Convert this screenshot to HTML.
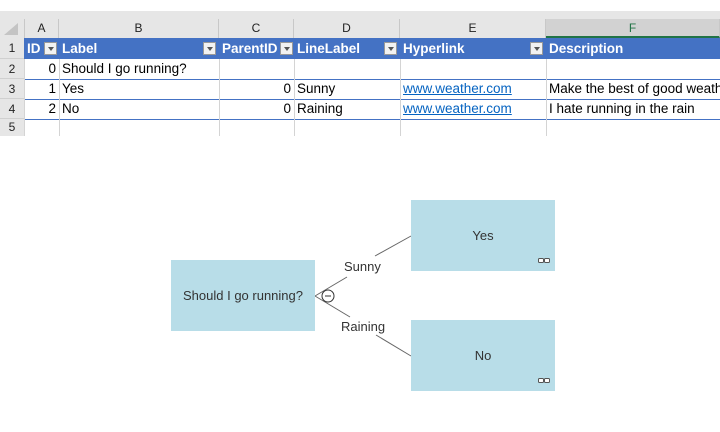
<!DOCTYPE html>
<html><head><style>
body{margin:0;width:720px;height:432px;background:#fff;font-family:"Liberation Sans",Calibri,sans-serif;position:relative;overflow:hidden}
.a{position:absolute;box-sizing:border-box}
.hdr{background:#e6e6e6;top:11px;height:27px;left:0;width:720px}
.cl{top:19px;height:19px;font-size:12px;text-align:center;color:#222;line-height:19px;border-right:1px solid #c8c8c8}
.rh{left:0;width:24px;font-size:12px;text-align:center;color:#222;background:#e6e6e6;border-bottom:1px solid #d0d0d0}
.c{font-size:13.5px;color:#000;line-height:20px;white-space:nowrap;overflow:hidden;padding:0 3px}
.th{background:#4472c4;color:#fff;font-weight:bold;top:38px;height:21px;line-height:21px}
.dd{position:absolute;width:13px;height:13px;top:4px;background:#f2f2f2;border:1px solid #999;box-sizing:border-box}
.dd:after{content:"";position:absolute;left:3px;top:4px;border:3px solid transparent;border-top:4px solid #555}
.box{background:#b8dde8;font-size:13px;color:#333;display:flex;align-items:center;justify-content:center}
.lnk{color:#0563c1;text-decoration:underline}
</style></head><body>
<div class="a hdr"></div>
<div class="a" style="left:4px;top:23px;width:0;height:0;border-left:14px solid transparent;border-bottom:12px solid #c4c4c4"></div>
<div class="a cl" style="left:24px;width:35px;border-left:1px solid #c8c8c8">A</div>
<div class="a cl" style="left:59px;width:160px">B</div>
<div class="a cl" style="left:219px;width:75px">C</div>
<div class="a cl" style="left:294px;width:106px">D</div>
<div class="a cl" style="left:400px;width:146px">E</div>
<div class="a cl" style="left:546px;width:174px;background:#d2d2d2;color:#217346;border-bottom:2px solid #217346">F</div>
<div class="a rh" style="top:38px;height:21px;line-height:21px">1</div>
<div class="a rh" style="top:59px;height:20px;line-height:20px">2</div>
<div class="a rh" style="top:79px;height:20px;line-height:20px">3</div>
<div class="a rh" style="top:99px;height:20px;line-height:20px">4</div>
<div class="a rh" style="top:119px;height:17px;line-height:17px;border-bottom:none">5</div>
<div class="a th c" style="left:24px;width:696px;padding:0"></div>
<div class="a th c" style="left:24px">ID</div><div class="dd" style="left:44px;top:42px"></div>
<div class="a th c" style="left:59px">Label</div><div class="dd" style="left:203px;top:42px"></div>
<div class="a th c" style="left:219px">ParentID</div><div class="dd" style="left:280px;top:42px"></div>
<div class="a th c" style="left:294px">LineLabel</div><div class="dd" style="left:384px;top:42px"></div>
<div class="a th c" style="left:400px">Hyperlink</div><div class="dd" style="left:530px;top:42px"></div>
<div class="a th c" style="left:546px">Description</div>
<div class="a" style="left:24px;top:79px;width:696px;height:1px;background:#4472c4"></div>
<div class="a" style="left:24px;top:99px;width:696px;height:1px;background:#4472c4"></div>
<div class="a" style="left:24px;top:119px;width:696px;height:1px;background:#4472c4"></div>
<div class="a" style="left:59px;top:59px;width:1px;height:77px;background:#d4d4d4"></div>
<div class="a" style="left:219px;top:59px;width:1px;height:77px;background:#d4d4d4"></div>
<div class="a" style="left:294px;top:59px;width:1px;height:77px;background:#d4d4d4"></div>
<div class="a" style="left:400px;top:59px;width:1px;height:77px;background:#d4d4d4"></div>
<div class="a" style="left:546px;top:59px;width:1px;height:77px;background:#d4d4d4"></div>
<div class="a" style="left:24px;top:59px;width:1px;height:77px;background:#d4d4d4"></div>
<div class="a c" style="left:24px;width:35px;top:59px;text-align:right">0</div>
<div class="a c" style="left:24px;width:35px;top:79px;text-align:right">1</div>
<div class="a c" style="left:24px;width:35px;top:99px;text-align:right">2</div>
<div class="a c" style="left:59px;top:59px">Should I go running?</div>
<div class="a c" style="left:59px;top:79px">Yes</div>
<div class="a c" style="left:59px;top:99px">No</div>
<div class="a c" style="left:219px;width:75px;top:79px;text-align:right">0</div>
<div class="a c" style="left:219px;width:75px;top:99px;text-align:right">0</div>
<div class="a c" style="left:294px;top:79px">Sunny</div>
<div class="a c" style="left:294px;top:99px">Raining</div>
<div class="a c lnk" style="left:400px;top:79px">www.weather.com</div>
<div class="a c lnk" style="left:400px;top:99px">www.weather.com</div>
<div class="a c" style="left:546px;width:174px;top:79px">Make the best of good weather</div>
<div class="a c" style="left:546px;width:174px;top:99px">I hate running in the rain</div>
<svg class="a" style="left:0;top:0" width="720" height="432">
<g stroke="#666" stroke-width="1" fill="none">
<line x1="315" y1="296" x2="347" y2="277"/>
<line x1="375" y1="256" x2="411" y2="236"/>
<line x1="315" y1="296" x2="350" y2="317"/>
<line x1="376" y1="335" x2="411" y2="356"/>
<circle cx="328" cy="296" r="6" fill="#fff" stroke="#333"/>
<line x1="325" y1="296" x2="331" y2="296" stroke="#333"/>
</g>
</svg>
<div class="a box" style="left:171px;top:260px;width:144px;height:71px">Should I go running?</div>
<div class="a box" style="left:411px;top:200px;width:144px;height:71px">Yes</div>
<div class="a box" style="left:411px;top:320px;width:144px;height:71px">No</div>
<svg class="a" style="left:0;top:0" width="720" height="432">
<g fill="#fff" stroke="#555" stroke-width="1">
<rect x="538.5" y="258.5" width="5" height="4" rx="1"/><rect x="544.5" y="258.5" width="5" height="4" rx="1"/>
<rect x="538.5" y="378.5" width="5" height="4" rx="1"/><rect x="544.5" y="378.5" width="5" height="4" rx="1"/>
</g></svg>
<div class="a" style="left:344px;top:259px;font-size:13px;color:#333">Sunny</div>
<div class="a" style="left:341px;top:319px;font-size:13px;color:#333">Raining</div>
</body></html>
